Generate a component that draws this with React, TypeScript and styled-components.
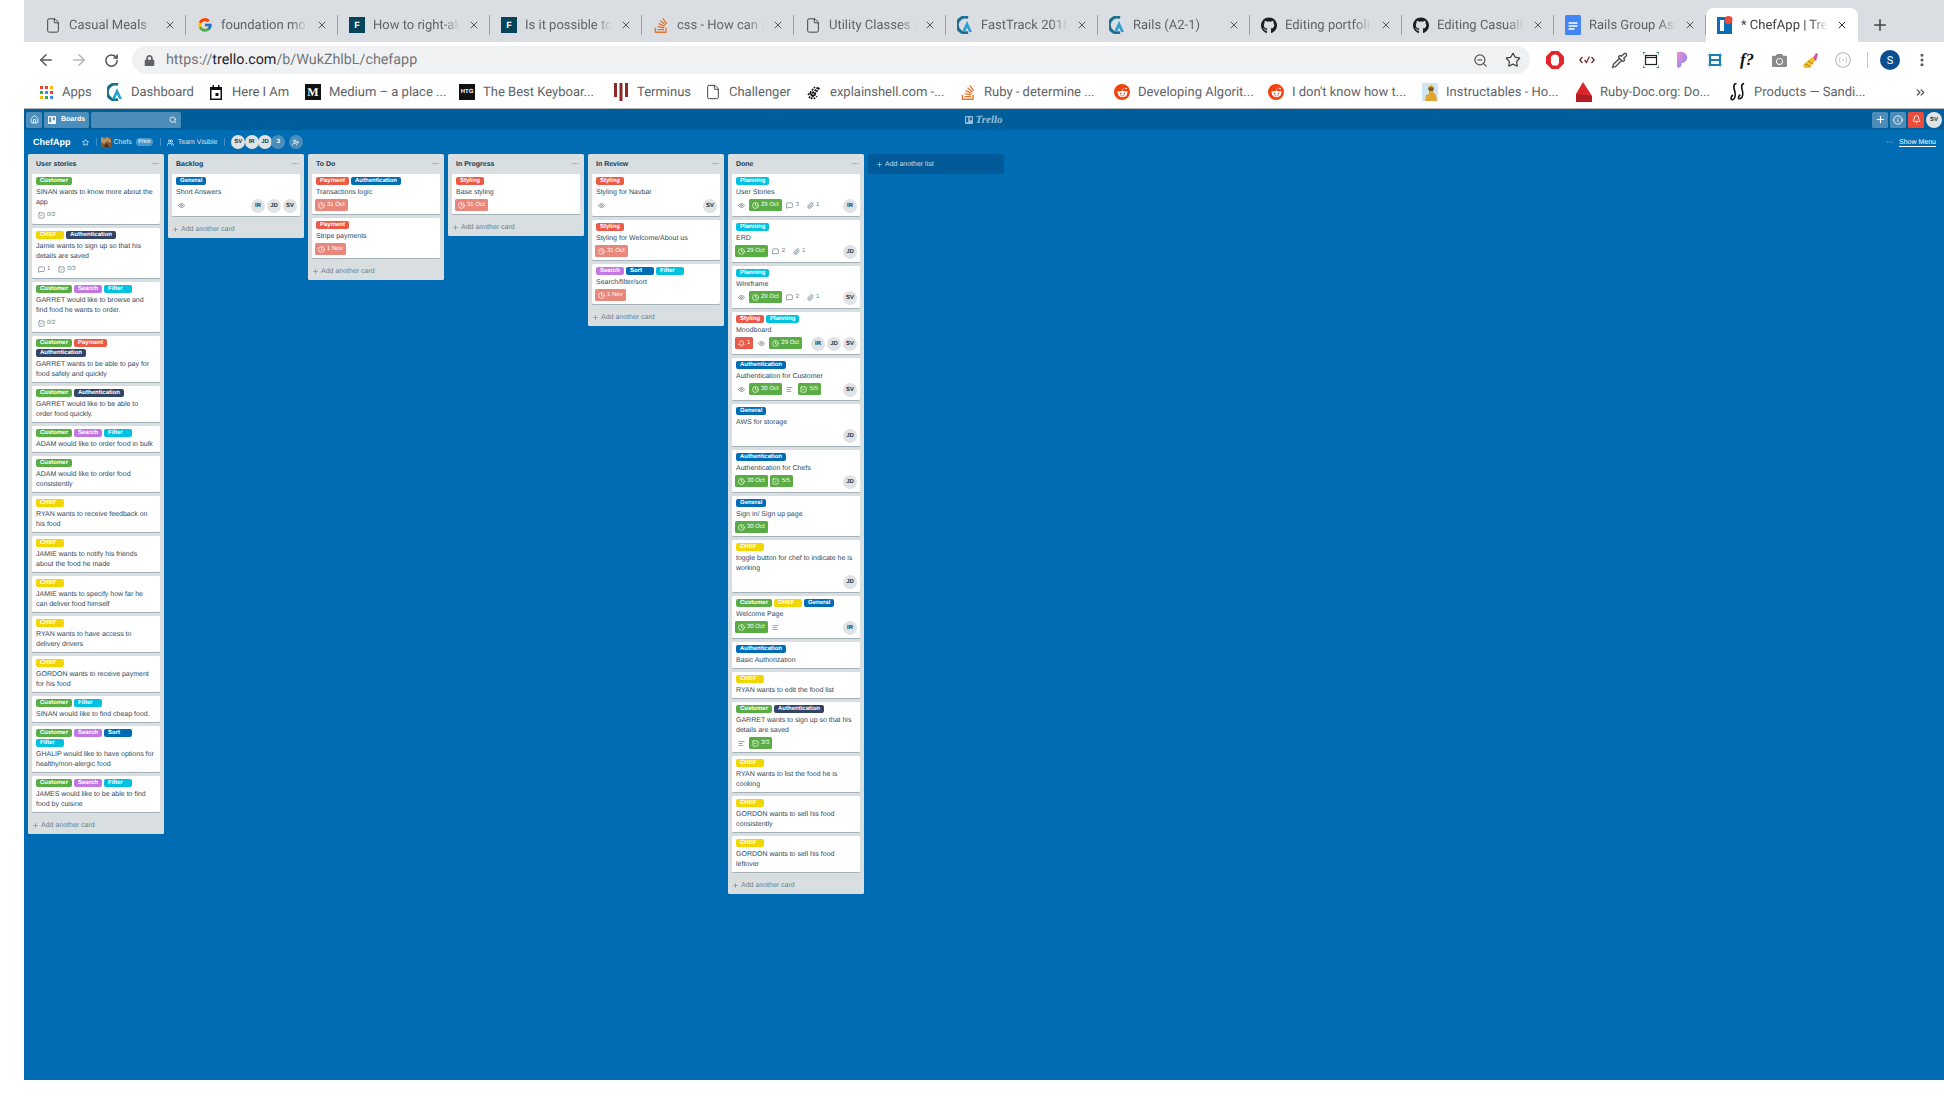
import React from "react";
import styled, { createGlobalStyle } from "styled-components";
import {
  AlignLeft,
  ArrowLeft,
  ArrowRight,
  Bell,
  ChevronsRight,
  Clock,
  EllipsisVertical,
  Eye,
  File,
  Home,
  Info,
  MessageSquare,
  Paperclip,
  Pipette,
  Plus,
  RotateCw,
  Search,
  SquareCheck,
  Star,
  Users,
  UserPlus,
  X,
  ZoomOut,
} from "lucide-react";
import { FaCamera, FaGithub, FaLock, FaRedditAlien, FaStackOverflow } from "react-icons/fa";
import { FcGoogle } from "react-icons/fc";

const GlobalStyle = createGlobalStyle`
  html, body {
    margin: 0;
    padding: 0;
    background: #fff;
  }
  body {
    font-family: "Liberation Sans", Arial, sans-serif;
    text-rendering: geometricPrecision;
  }
`;

/* ---------- favicons ---------- */

const AtlasIcon = () => (
  <svg width="16" height="18" viewBox="0 0 16 18">
    <path d="M11 1.5A8 8 0 1 0 11 16.5" fill="none" stroke="#1f6f8f" strokeWidth="3" />
    <path d="M10 5l5 11h-3l-2-4.500-2 4.500H5z" fill="#2a9fd0" />
  </svg>
);

const DocsIcon = () => (
  <svg width="16" height="20" viewBox="0 0 16 20">
    <rect width="16" height="20" rx="1.500" fill="#4285f4" />
    <path d="M3.500 8h9M3.500 11h9M3.500 14h6" stroke="#fff" strokeWidth="1.300" />
  </svg>
);

const TrelloFav = () => (
  <svg width="16" height="18" viewBox="0 0 16 18">
    <rect y="1" width="15" height="17" fill="#0b6db4" />
    <rect x="3" y="4" width="4" height="11" fill="#fff" />
    <circle cx="11.500" cy="4" r="4" fill="#eb4d3d" />
  </svg>
);

const CalendarIcon = () => (
  <svg width="12" height="15" viewBox="0 0 12 15">
    <path d="M0 2h2.500V0h1.500v2h4V0h1.500v2H12v13H0z" fill="#111" />
    <rect x="1.500" y="5" width="9" height="8.500" fill="#fff" />
    <rect x="5.500" y="8" width="3" height="3" fill="#111" />
  </svg>
);

const TerminusIcon = () => (
  <svg width="14" height="18" viewBox="0 0 14 18">
    <path d="M0 0h3v14H0zM5.500 0h3v18h-3zM11 0h3v14h-3z" fill="#8c2a2a" />
  </svg>
);

const ShellIcon = () => (
  <svg width="15" height="16" viewBox="0 0 15 16">
    <path d="M2 14l9-11M4 15l9-12M1 11l7-8M5 8l5 5M3 9l5 6" stroke="#111" strokeWidth="1.600" strokeDasharray="2 1" />
  </svg>
);

const InstructablesIcon = () => (
  <svg width="16" height="18" viewBox="0 0 16 18">
    <rect width="16" height="18" fill="#cfe6f2" />
    <path d="M3 18l1-6 3-1V8L6 4l3-2 3 2-1 5 3 3 1 6z" fill="#e2a62c" />
    <path d="M6 5l3-1 3 1-1 3H7z" fill="#7a5a25" />
  </svg>
);

const RubyIcon = () => (
  <svg width="16" height="20" viewBox="0 0 16 20">
    <path d="M7 0l9 14v6H0v-8z" fill="#d9262a" />
    <path d="M0 12l8 1 8 1v6H0z" fill="#b01c20" />
  </svg>
);

const ProductsIcon = () => (
  <svg width="17" height="20" viewBox="0 0 17 20" fill="none" stroke="#111" strokeWidth="1.700">
    <path d="M7 1C3 1 4 6 5 9s1 8-2 9-2-3 0-5" />
    <path d="M15 1c-3 0-3 4-2 7s1 8-2 9-2-3 0-4" />
  </svg>
);

const AppsGrid = () => (
  <svg width="13" height="13" viewBox="0 0 13 13">
    {[0, 5, 10].map((y, r) =>
      [0, 5, 10].map((x, c) => (
        <rect
          key={`${r}${c}`}
          x={x}
          y={y}
          width="3"
          height="3"
          fill={["#ea4335", "#ea4335", "#fbbc04", "#34a853", "#4285f4", "#ea4335", "#fbbc04", "#34a853", "#4285f4"][r * 3 + c]}
        />
      ))
    )}
  </svg>
);

const BlockerIcon = () => (
  <svg width="18" height="18" viewBox="0 0 18 18">
    <path d="M5.500 0h7L18 5.500v7L12.500 18h-7L0 12.500v-7z" fill="#e3262b" />
    <path d="M5 9V5.500h1.300V4h1.500v-.5h2.500V4h1.400v1.500H13V12l-1.500 2.500h-5L5 12z" fill="#fff" />
  </svg>
);

const CodeCheckIcon = () => (
  <svg width="16" height="10" viewBox="0 0 16 10" fill="none" stroke="#5b2c2c" strokeWidth="1.300">
    <path d="M3.500 2L.8 5l2.700 3M12.500 2l2.700 3-2.700 3" />
    <path d="M5.500 5l2 2.500L10.500 1.500" stroke="#8c2a2a" />
  </svg>
);

const FrameIcon = () => (
  <svg width="16" height="16" viewBox="0 0 16 16" fill="none">
    <rect x="2.500" y="3.500" width="11" height="9" stroke="#222" strokeWidth="1.200" />
    <path d="M2.500 5.500h11" stroke="#222" strokeWidth="1.200" />
    <path d="M0 2.500V0h2.500M13.500 0H16v2.500M16 13.500V16h-2.500M2.500 16H0v-2.500" stroke="#1e7a34" strokeWidth="1.300" />
  </svg>
);

const PetalIcon = () => (
  <svg width="14" height="16" viewBox="0 0 14 16">
    <defs>
      <linearGradient id="petal" x1="0" y1="0" x2="1" y2="1">
        <stop offset="0" stopColor="#f08bd0" />
        <stop offset="1" stopColor="#7d8cf5" />
      </linearGradient>
    </defs>
    <path d="M1 0h6a7 6 0 0 1 0 11H5.500v3l-3 2L1 15z" fill="url(#petal)" />
  </svg>
);

const GridBoxIcon = () => (
  <svg width="16" height="16" viewBox="0 0 16 16" fill="none">
    <path d="M0 3h16M0 13h16M3 0v16M13 0v16" stroke="#c6c6c6" strokeWidth="1" />
    <path d="M3 3h10v10H3zM3 8h11" stroke="#1b7db0" strokeWidth="2.200" />
  </svg>
);

const WandIcon = () => (
  <svg width="16" height="16" viewBox="0 0 16 16">
    <path d="M0 13l9-8 4 3-7 8H1z" fill="#f2c230" />
    <path d="M2 12l6 3M5 9l5 3" stroke="#a98212" strokeWidth="1" />
    <path d="M10 6l3-5 2 1-2 7z" fill="#d94fa0" />
  </svg>
);

const JsonIcon = () => (
  <svg width="16" height="16" viewBox="0 0 16 16" fill="none" stroke="#b5b5b5">
    <circle cx="8" cy="8" r="7.300" strokeWidth="1.100" />
    <path d="M5.500 5C4 5 5 8 4 8c1 0 0 3 1.500 3M10.500 5c1.500 0 .5 3 1.500 3-1 0 0 3-1.500 3M7 8h2" strokeWidth=".9" />
  </svg>
);

const ChefsPhoto = () => (
  <svg width="10" height="10" viewBox="0 0 10 10">
    <rect width="10" height="10" fill="#8a5a33" />
    <path d="M0 0l4 2 2-2 4 3v3L6 4 3 7 0 5z" fill="#c09460" />
    <path d="M3 10l2-4 4 4z" fill="#4f2f18" />
  </svg>
);

const BoardGlyph = () => (
  <svg width="8" height="8" viewBox="0 0 8 8">
    <path fillRule="evenodd" d="M1 0h6a1 1 0 0 1 1 1v6a1 1 0 0 1-1 1H1a1 1 0 0 1-1-1V1a1 1 0 0 1 1-1zm.2 1.200v5h2v-5zm3.600 0v3h2v-3z" fill="#fff" />
  </svg>
);

/* ---------- data ---------- */

const LABEL_COLORS: Record<string, string> = {
  Customer: "#5aac44",
  CHEF: "#f2d600",
  Search: "#c377e0",
  Filter: "#00c2e0",
  Payment: "#eb5a46",
  Styling: "#eb5a46",
  Planning: "#00c2e0",
  General: "#006cb4",
  Sort: "#006cb4",
  Authentication: "#006cb4",
  Auth: "#344563",
};

type BadgeData = { icon: "eye" | "clock" | "comment" | "clip" | "check" | "desc" | "bell"; text?: string; tone?: string };
type CardData = { labels: string[]; title: string; badges?: BadgeData[]; members?: string[] };

const eye: BadgeData = { icon: "eye" };
const desc: BadgeData = { icon: "desc" };
const clip: BadgeData = { icon: "clip", text: "1" };
const late = (text: string): BadgeData => ({ icon: "clock", text, tone: "#e8877b" });
const done = (text: string): BadgeData => ({ icon: "clock", text, tone: "#5aac44" });
const todo = (text: string): BadgeData => ({ icon: "check", text });
const comment = (text: string): BadgeData => ({ icon: "comment", text });

const LISTS: { name: string; cards: CardData[] }[] = [
  {
    name: "User stories",
    cards: [
      { labels: ["Customer"], title: "SINAN wants to know more about the app", badges: [todo("0/2")] },
      { labels: ["CHEF", "Auth"], title: "Jamie wants to sign up so that his details are saved", badges: [comment("1"), todo("0/3")] },
      { labels: ["Customer", "Search", "Filter"], title: "GARRET would like to browse and find food he wants to order.", badges: [todo("0/2")] },
      { labels: ["Customer", "Payment", "Auth"], title: "GARRET wants to be able to pay for food safely and quickly" },
      { labels: ["Customer", "Auth"], title: "GARRET would like to be able to order food quickly." },
      { labels: ["Customer", "Search", "Filter"], title: "ADAM would like to order food in bulk" },
      { labels: ["Customer"], title: "ADAM would like to order food consistently" },
      { labels: ["CHEF"], title: "RYAN wants to receive feedback on his food" },
      { labels: ["CHEF"], title: "JAMIE wants to notify his friends about the food he made" },
      { labels: ["CHEF"], title: "JAMIE wants to specify how far he can deliver food himself" },
      { labels: ["CHEF"], title: "RYAN wants to have access to delivery drivers" },
      { labels: ["CHEF"], title: "GORDON wants to receive payment for his food" },
      { labels: ["Customer", "Filter"], title: "SINAN would like to find cheap food." },
      { labels: ["Customer", "Search", "Sort", "Filter"], title: "GHALIP would like to have options for healthy/non-alergic food" },
      { labels: ["Customer", "Search", "Filter"], title: "JAMES would like to be able to find food by cuisine" },
    ],
  },
  {
    name: "Backlog",
    cards: [{ labels: ["General"], title: "Short Answers", badges: [eye], members: ["IR", "JD", "SV"] }],
  },
  {
    name: "To Do",
    cards: [
      { labels: ["Payment", "Authentication"], title: "Transactions logic", badges: [late("31 Oct")] },
      { labels: ["Payment"], title: "Stripe payments", badges: [late("1 Nov")] },
    ],
  },
  {
    name: "In Progress",
    cards: [{ labels: ["Styling"], title: "Base styling", badges: [late("31 Oct")] }],
  },
  {
    name: "In Review",
    cards: [
      { labels: ["Styling"], title: "Styling for Navbar", badges: [eye], members: ["SV"] },
      { labels: ["Styling"], title: "Styling for Welcome/About us", badges: [late("31 Oct")] },
      { labels: ["Search", "Sort", "Filter"], title: "Search/filter/sort", badges: [late("1 Nov")] },
    ],
  },
  {
    name: "Done",
    cards: [
      { labels: ["Planning"], title: "User Stories", badges: [eye, done("29 Oct"), comment("3"), clip], members: ["IR"] },
      { labels: ["Planning"], title: "ERD", badges: [done("29 Oct"), comment("2"), clip], members: ["JD"] },
      { labels: ["Planning"], title: "Wireframe", badges: [eye, done("29 Oct"), comment("2"), clip], members: ["SV"] },
      {
        labels: ["Styling", "Planning"],
        title: "Moodboard",
        badges: [{ icon: "bell", text: "1", tone: "#eb5a46" }, eye, done("29 Oct")],
        members: ["IR", "JD", "SV"],
      },
      {
        labels: ["Authentication"],
        title: "Authentication for Customer",
        badges: [eye, done("30 Oct"), desc, { icon: "check", text: "5/5", tone: "#5aac44" }],
        members: ["SV"],
      },
      { labels: ["General"], title: "AWS for storage", members: ["JD"] },
      {
        labels: ["Authentication"],
        title: "Authentication for Chefs",
        badges: [done("30 Oct"), { icon: "check", text: "5/5", tone: "#5aac44" }],
        members: ["JD"],
      },
      { labels: ["General"], title: "Sign in/ Sign up page", badges: [done("30 Oct")] },
      { labels: ["CHEF"], title: "toggle button for chef to indicate he is working", members: ["JD"] },
      { labels: ["Customer", "CHEF", "General"], title: "Welcome Page", badges: [done("30 Oct"), desc], members: ["IR"] },
      { labels: ["Authentication"], title: "Basic Authorization" },
      { labels: ["CHEF"], title: "RYAN wants to edit the food list" },
      {
        labels: ["Customer", "Auth"],
        title: "GARRET wants to sign up so that his details are saved",
        badges: [desc, { icon: "check", text: "3/3", tone: "#5aac44" }],
      },
      { labels: ["CHEF"], title: "RYAN wants to list the food he is cooking" },
      { labels: ["CHEF"], title: "GORDON wants to sell his food consistently" },
      { labels: ["CHEF"], title: "GORDON wants to sell his food leftover" },
    ],
  },
];

const F = () => <FBox>F</FBox>;
const Gh = () => <FaGithub size={19} color="#1b1f23" />;
const Doc = () => <File size={17} color="#444" strokeWidth={1.5} />;
const So = () => <FaStackOverflow size={17} color="#e2762c" />;
const Google = () => <FcGoogle size={16} />;
const Challenger = () => <File size={16} color="#444" strokeWidth={1.5} />;
const MediumMark = () => <SquareMark $serif>M</SquareMark>;
const HtgMark = () => <SquareMark>HTG</SquareMark>;
const Reddit = () => (
  <RedditDot>
    <FaRedditAlien size={11} color="#fff" />
  </RedditDot>
);

const TABS: { title: string; Icon: React.ComponentType }[] = [
  { title: "Casual Meals", Icon: Doc },
  { title: "foundation move", Icon: Google },
  { title: "How to right-align", Icon: F },
  { title: "Is it possible to", Icon: F },
  { title: "css - How can I", Icon: So },
  { title: "Utility Classes | F", Icon: Doc },
  { title: "FastTrack 2018", Icon: AtlasIcon },
  { title: "Rails (A2-1)", Icon: AtlasIcon },
  { title: "Editing portfolio", Icon: Gh },
  { title: "Editing CasualMeals", Icon: Gh },
  { title: "Rails Group Assign", Icon: DocsIcon },
];

const BOOKMARKS: { title: string; width: number; Icon: React.ComponentType }[] = [
  { title: "Apps", width: 69, Icon: AppsGrid },
  { title: "Dashboard", width: 101, Icon: AtlasIcon },
  { title: "Here I Am", width: 97, Icon: CalendarIcon },
  { title: "Medium – a place ...", width: 154, Icon: MediumMark },
  { title: "The Best Keyboar...", width: 154, Icon: HtgMark },
  { title: "Terminus", width: 92, Icon: TerminusIcon },
  { title: "Challenger", width: 101, Icon: Challenger },
  { title: "explainshell.com -...", width: 154, Icon: ShellIcon },
  { title: "Ruby - determine ...", width: 154, Icon: So },
  { title: "Developing Algorit...", width: 154, Icon: Reddit },
  { title: "I don't know how t...", width: 154, Icon: Reddit },
  { title: "Instructables - Ho...", width: 154, Icon: InstructablesIcon },
  { title: "Ruby-Doc.org: Do...", width: 154, Icon: RubyIcon },
  { title: "Products — Sandi...", width: 154, Icon: ProductsIcon },
];

const BADGE_ICONS = {
  eye: Eye,
  clock: Clock,
  comment: MessageSquare,
  clip: Paperclip,
  check: SquareCheck,
  desc: AlignLeft,
  bell: Bell,
};

/* ---------- pieces ---------- */

const CardBadge = ({ badge }: { badge: BadgeData }) => {
  const Icon = BADGE_ICONS[badge.icon];
  return (
    <Badge $tone={badge.tone} $hasText={!!badge.text}>
      <BadgeIcon>
        <Icon size={7} strokeWidth={2.4} />
      </BadgeIcon>
      {badge.text}
    </Badge>
  );
};

const TrelloCard = ({ card }: { card: CardData }) => (
  <Card>
    <Labels>
      {card.labels.map((l, i) => (
        <Label key={i} $color={LABEL_COLORS[l]}>
          {l === "Auth" ? "Authentication" : l}
        </Label>
      ))}
    </Labels>
    <CardTitle>{card.title}</CardTitle>
    {(card.badges || card.members) && (
      <CardFooter>
        {card.badges?.map((b, i) => <CardBadge key={i} badge={b} />)}
        {card.members && (
          <Members>
            {card.members.map((m) => (
              <Avatar key={m}>{m}</Avatar>
            ))}
          </Members>
        )}
      </CardFooter>
    )}
  </Card>
);

export default function App() {
  return (
    <>
      <GlobalStyle />
      <Screen>
        <TabStrip>
          {TABS.map((t) => (
            <Tab key={t.title}>
              <TabIcon><t.Icon /></TabIcon>
              <TabTitle>{t.title}</TabTitle>
              <X size={12} color="#555" strokeWidth={2} />
            </Tab>
          ))}
          <ActiveTab>
            <TabIcon>
              <TrelloFav />
            </TabIcon>
            <TabTitle>* ChefApp | Trello</TabTitle>
            <X size={12} color="#333" strokeWidth={2} />
          </ActiveTab>
          <NewTab>
            <Plus size={18} color="#444" strokeWidth={2} />
          </NewTab>
        </TabStrip>

        <Toolbar>
          <NavButton>
            <ArrowLeft size={18} color="#555" strokeWidth={2} />
          </NavButton>
          <NavButton>
            <ArrowRight size={18} color="#b4b6b9" strokeWidth={2} />
          </NavButton>
          <NavButton>
            <RotateCw size={15} color="#555" strokeWidth={2.4} />
          </NavButton>
          <Omnibox>
            <FaLock size={11} color="#5f6368" />
            <Url>
              https://<b>trello.com</b>/b/WukZhlbL/chefapp
            </Url>
            <OmniIcons>
              <ZoomOut size={15} color="#555" strokeWidth={2} />
              <Star size={16} color="#444" strokeWidth={1.8} />
            </OmniIcons>
          </Omnibox>
          <Extensions>
            <ExtSlot><BlockerIcon /></ExtSlot>
            <ExtSlot><CodeCheckIcon /></ExtSlot>
            <ExtSlot><Pipette size={17} color="#555" strokeWidth={2} /></ExtSlot>
            <ExtSlot><FrameIcon /></ExtSlot>
            <ExtSlot><PetalIcon /></ExtSlot>
            <ExtSlot><GridBoxIcon /></ExtSlot>
            <ExtSlot><FontHelp>f?</FontHelp></ExtSlot>
            <ExtSlot><FaCamera size={15} color="#8a8a8a" /></ExtSlot>
            <ExtSlot><WandIcon /></ExtSlot>
            <ExtSlot><JsonIcon /></ExtSlot>
            <ToolDivider />
            <Profile>S</Profile>
            <EllipsisVertical size={16} color="#555" strokeWidth={2.6} />
          </Extensions>
        </Toolbar>

        <BookmarkBar>
          {BOOKMARKS.map((b) => (
            <Bookmark key={b.title} $width={b.width}>
              <BookmarkIcon><b.Icon /></BookmarkIcon>
              {b.title}
            </Bookmark>
          ))}
          <MoreMarks>
            <ChevronsRight size={13} color="#444" strokeWidth={2} />
          </MoreMarks>
        </BookmarkBar>

        <Trello>
          <TopNav>
            <NavSide>
              <NavBtn><Home size={9} color="#fff" strokeWidth={2.2} /></NavBtn>
              <BoardsBtn>
                <BoardGlyph />
                Boards
              </BoardsBtn>
              <SearchBox><Search size={8} color="#fff" strokeWidth={2.4} /></SearchBox>
            </NavSide>
            <Logo>
              <LogoGlyph><BoardGlyph /></LogoGlyph>
              Trello
            </Logo>
            <NavRight>
              <NavBtn><Plus size={11} color="#fff" strokeWidth={2.4} /></NavBtn>
              <NavBtn><Info size={10} color="#fff" strokeWidth={2.2} /></NavBtn>
              <NavBtn $alert><Bell size={9} color="#fff" strokeWidth={2.4} /></NavBtn>
              <NavAvatar>SV</NavAvatar>
            </NavRight>
          </TopNav>

          <BoardHeader>
            <BoardName>ChefApp</BoardName>
            <HeaderStar><Star size={7} color="#fff" strokeWidth={2.4} /></HeaderStar>
            <HeaderDivider />
            <ChefsPhoto />
            <HeaderText>Chefs</HeaderText>
            <FreePill>Free</FreePill>
            <HeaderDivider />
            <TeamIcon><Users size={7} color="#fff" strokeWidth={2.6} /></TeamIcon>
            <HeaderText>Team Visible</HeaderText>
            <HeaderDivider />
            <Stack>
              <StackAvatar>SV</StackAvatar>
              <StackAvatar>IR</StackAvatar>
              <StackAvatar>JD</StackAvatar>
              <StackAvatar $count>3</StackAvatar>
            </Stack>
            <Invite><UserPlus size={7} color="#fff" strokeWidth={2.6} /></Invite>
            <ShowMenu>
              <span>···</span>
              <u>Show Menu</u>
            </ShowMenu>
          </BoardHeader>

          <Canvas>
            {LISTS.map((list) => (
              <List key={list.name}>
                <ListHeader>
                  {list.name}
                  <ListDots>···</ListDots>
                </ListHeader>
                {list.cards.map((c, i) => (
                  <TrelloCard key={i} card={c} />
                ))}
                <AddCard>
                  <Plus size={7} strokeWidth={2} />
                  Add another card
                </AddCard>
              </List>
            ))}
            <AddList>
              <Plus size={7} strokeWidth={2} />
              Add another list
            </AddList>
          </Canvas>
        </Trello>
      </Screen>
    </>
  );
}

/* ---------- browser chrome ---------- */

const Screen = styled.div`
  width: 1920px;
  height: 1080px;
  margin-left: 24px;
  display: flex;
  flex-direction: column;
  overflow: hidden;
`;

const TabStrip = styled.div`
  height: 42px;
  flex-shrink: 0;
  background: #dadde1;
  display: flex;
  align-items: flex-end;
  padding-left: 10px;
  font-family: Roboto, "Liberation Sans", sans-serif;
  font-size: 13px;
  color: #5f6368;
`;

const Tab = styled.div`
  position: relative;
  width: 152px;
  height: 34px;
  box-sizing: border-box;
  padding: 0 10px 0 11px;
  display: flex;
  align-items: center;
  gap: 8px;
  flex-shrink: 0;

  &::after {
    content: "";
    position: absolute;
    right: 0;
    top: 7px;
    height: 20px;
    width: 1px;
    background: #9ea1a5;
  }
`;

const ActiveTab = styled(Tab)`
  background: #fff;
  border-radius: 8px 8px 0 0;
  color: #3c4043;

  &::after {
    display: none;
  }
`;

const TabIcon = styled.span`
  width: 16px;
  height: 20px;
  display: flex;
  align-items: center;
  justify-content: center;
  flex-shrink: 0;
`;

const TabTitle = styled.span`
  flex: 1;
  min-width: 0;
  white-space: nowrap;
  overflow: hidden;
  -webkit-mask-image: linear-gradient(to right, #000 80%, transparent);
  mask-image: linear-gradient(to right, #000 80%, transparent);
`;

const NewTab = styled.span`
  margin-left: 13px;
  height: 34px;
  display: flex;
  align-items: center;
`;

const FBox = styled.span`
  width: 16px;
  height: 16px;
  background: #074459;
  color: #fff;
  font: bold 9px "Liberation Sans", sans-serif;
  display: flex;
  align-items: center;
  justify-content: center;
`;

const Toolbar = styled.div`
  height: 36px;
  flex-shrink: 0;
  background: #fff;
  display: flex;
  align-items: center;
  padding-left: 5px;
`;

const NavButton = styled.span`
  width: 33px;
  display: flex;
  justify-content: center;
`;

const Omnibox = styled.div`
  width: 1398px;
  height: 28px;
  margin-left: 4px;
  border-radius: 14px;
  background: #f0f1f3;
  display: flex;
  align-items: center;
  padding: 0 9px 0 12px;
  box-sizing: border-box;
  gap: 11px;
`;

const Url = styled.span`
  flex: 1;
  font: 14.3px Roboto, "Liberation Sans", sans-serif;
  color: #70757a;

  b {
    font-weight: 400;
    color: #202124;
  }
`;

const OmniIcons = styled.span`
  display: flex;
  align-items: center;
  gap: 17px;
`;

const Extensions = styled.div`
  display: flex;
  align-items: center;
  margin-left: 9px;
`;

const ExtSlot = styled.span`
  width: 32px;
  display: flex;
  justify-content: center;
`;

const FontHelp = styled.span`
  font: italic bold 17px "Liberation Serif", serif;
  color: #111;
`;

const ToolDivider = styled.span`
  width: 1px;
  height: 16px;
  background: #c4c6c9;
  margin: 0 12px 0 8px;
`;

const Profile = styled.span`
  width: 20px;
  height: 20px;
  border-radius: 50%;
  background: #0b4f8f;
  color: #fff;
  font: 11px Roboto, sans-serif;
  display: flex;
  align-items: center;
  justify-content: center;
  margin-right: 14px;
`;

const BookmarkBar = styled.div`
  height: 31px;
  flex-shrink: 0;
  box-sizing: border-box;
  border-bottom: 1px solid #b5b6b8;
  padding: 0 0 2px 14px;
  background: #fff;
  display: flex;
  align-items: center;
  font-family: Roboto, "Liberation Sans", sans-serif;
  font-size: 13px;
  color: #5f6368;
`;

const Bookmark = styled.span<{ $width: number }>`
  width: ${(p) => p.$width}px;
  flex-shrink: 0;
  display: flex;
  align-items: center;
  gap: 8px;
  white-space: nowrap;
`;

const BookmarkIcon = styled.span`
  width: 16px;
  height: 20px;
  display: flex;
  align-items: center;
  justify-content: center;
`;

const MoreMarks = styled.span`
  margin-left: 30px;
  display: flex;
`;

const SquareMark = styled.span<{ $serif?: boolean }>`
  width: 16px;
  height: 16px;
  background: #111;
  color: #fff;
  font: bold ${(p) => (p.$serif ? "12px \"Liberation Serif\", serif" : "6px \"Liberation Sans\", sans-serif")};
  display: flex;
  align-items: center;
  justify-content: center;
`;

const RedditDot = styled.span`
  width: 16px;
  height: 16px;
  border-radius: 50%;
  background: #f2420e;
  display: flex;
  align-items: center;
  justify-content: center;
`;

/* ---------- trello ---------- */

const Trello = styled.div`
  flex: 1;
  min-height: 0;
  background: #006cb4;
  display: flex;
  flex-direction: column;
`;

const TopNav = styled.div`
  height: 21px;
  background: #005e9b;
  display: grid;
  grid-template-columns: 1fr auto 1fr;
  align-items: center;
  padding: 0 2px;
`;

const NavSide = styled.div`
  display: flex;
  align-items: center;
  gap: 2px;
`;

const NavRight = styled(NavSide)`
  justify-content: flex-end;
`;

const NavBtn = styled.span<{ $alert?: boolean }>`
  width: 16px;
  height: 16px;
  border-radius: 1.5px;
  background: ${(p) => (p.$alert ? "#eb4d3d" : "#4c8db9")};
  display: flex;
  align-items: center;
  justify-content: center;
`;

const BoardsBtn = styled.span`
  width: 45px;
  height: 16px;
  box-sizing: border-box;
  padding-left: 4px;
  border-radius: 1.5px;
  background: #4c8db9;
  color: #fff;
  font-size: 7px;
  font-weight: 700;
  display: flex;
  align-items: center;
  gap: 5px;
`;

const SearchBox = styled.span`
  width: 90px;
  height: 16px;
  box-sizing: border-box;
  padding-right: 4px;
  border-radius: 1.5px;
  background: #4c8db9;
  display: flex;
  align-items: center;
  justify-content: flex-end;
`;

const Logo = styled.span`
  display: flex;
  align-items: center;
  gap: 2px;
  color: rgba(255, 255, 255, 0.6);
  font: italic bold 11px "Liberation Serif", serif;
`;

const LogoGlyph = styled.span`
  display: flex;
  opacity: 0.6;
`;

const NavAvatar = styled.span`
  width: 16px;
  height: 16px;
  border-radius: 50%;
  background: #dfe3e6;
  color: #17394d;
  font-size: 6px;
  font-weight: 700;
  display: flex;
  align-items: center;
  justify-content: center;
`;

const BoardHeader = styled.div`
  height: 24px;
  box-sizing: border-box;
  padding: 0 8px 0 9px;
  display: flex;
  align-items: center;
  color: #fff;
`;

const BoardName = styled.span`
  font-size: 9px;
  font-weight: 700;
  margin-right: 11px;
`;

const HeaderStar = styled.span`
  display: flex;
`;

const HeaderDivider = styled.span`
  width: 1px;
  height: 8px;
  background: rgba(255, 255, 255, 0.25);
  margin: 0 4px 0 7px;
`;

const HeaderText = styled.span`
  font-size: 7px;
  margin-left: 3px;
  color: rgba(255, 255, 255, 0.85);
`;

const FreePill = styled.span`
  margin-left: 4px;
  width: 17px;
  height: 8px;
  border-radius: 4px;
  background: rgba(255, 255, 255, 0.3);
  font-size: 6px;
  line-height: 8px;
  text-align: center;
`;

const TeamIcon = styled.span`
  display: flex;
  margin: 0 1px 0 2px;
`;

const Stack = styled.span`
  display: flex;
  margin-left: 2px;
`;

const StackAvatar = styled.span<{ $count?: boolean }>`
  width: 14px;
  height: 14px;
  margin-right: -0.7px;
  border-radius: 50%;
  background: ${(p) => (p.$count ? "#4c8db9" : "#dfe3e6")};
  color: ${(p) => (p.$count ? "#fff" : "#17394d")};
  font-size: 6px;
  font-weight: 700;
  display: flex;
  align-items: center;
  justify-content: center;
`;

const Invite = styled(StackAvatar)`
  margin-left: 4px;
  background: #4c8db9;
`;

const ShowMenu = styled.span`
  margin-left: auto;
  display: flex;
  align-items: center;
  gap: 6px;
  font-size: 7px;

  u {
    text-underline-offset: 1.5px;
  }
`;

const Canvas = styled.div`
  flex: 1;
  min-height: 0;
  padding-left: 4px;
  display: flex;
  align-items: flex-start;
  gap: 4px;
`;

const List = styled.div`
  width: 136px;
  flex-shrink: 0;
  box-sizing: border-box;
  padding: 0 4px;
  background: #d9dee1;
  border-radius: 1.5px;
  display: flex;
  flex-direction: column;
  gap: 4px;
`;

const ListHeader = styled.div`
  height: 16px;
  box-sizing: border-box;
  padding: 4px 0 0 4px;
  display: flex;
  align-items: center;
  justify-content: space-between;
  font-size: 7px;
  font-weight: 700;
  color: #17394d;
`;

const ListDots = styled.span`
  color: #6b808c;
  font-size: 7px;
  padding-right: 1px;
`;

const Card = styled.div`
  background: #fff;
  border-radius: 1.5px;
  box-shadow: 0 1px 0 rgba(9, 45, 66, 0.25);
  padding: 3px 4px;
`;

const Labels = styled.div`
  display: flex;
  flex-wrap: wrap;
  gap: 2px;
  margin-bottom: 2px;
`;

const Label = styled.span<{ $color: string }>`
  min-width: 20px;
  height: 8px;
  padding: 0 4px;
  border-radius: 2px;
  background: ${(p) => p.$color};
  color: #fff;
  font-size: 6px;
  font-weight: 700;
  line-height: 8px;
`;

const CardTitle = styled.div`
  padding-top: 1px;
  margin-bottom: -1px;
  font-size: 7px;
  line-height: 10px;
  color: #2f4a5c;
`;

const CardFooter = styled.div`
  margin: 2px -1px 0;
  display: flex;
  align-items: flex-start;
`;

const Badge = styled.span<{ $tone?: string; $hasText: boolean }>`
  height: 12px;
  min-width: 12px;
  margin-right: 2px;
  padding-right: ${(p) => (p.$hasText ? 3 : 0)}px;
  border-radius: 1.5px;
  background: ${(p) => p.$tone ?? "transparent"};
  color: ${(p) => (p.$tone ? "#fff" : "#6b808c")};
  font-size: 6px;
  display: flex;
  align-items: center;
`;

const BadgeIcon = styled.span`
  width: 12px;
  display: flex;
  justify-content: center;
`;

const Members = styled.span`
  margin-left: auto;
  display: flex;
  gap: 2px;
`;

const Avatar = styled.span`
  width: 14px;
  height: 14px;
  border-radius: 50%;
  background: #dfe3e6;
  color: #17394d;
  font-size: 6px;
  font-weight: 700;
  display: flex;
  align-items: center;
  justify-content: center;
`;

const AddCard = styled.div`
  height: 18px;
  display: flex;
  align-items: center;
  gap: 2px;
  font-size: 7px;
  color: #6b808c;
`;

const AddList = styled.div`
  width: 136px;
  height: 20px;
  box-sizing: border-box;
  padding-left: 8px;
  border-radius: 1.5px;
  background: rgba(0, 0, 0, 0.16);
  color: rgba(255, 255, 255, 0.8);
  font-size: 7px;
  display: flex;
  align-items: center;
  gap: 2px;
`;
